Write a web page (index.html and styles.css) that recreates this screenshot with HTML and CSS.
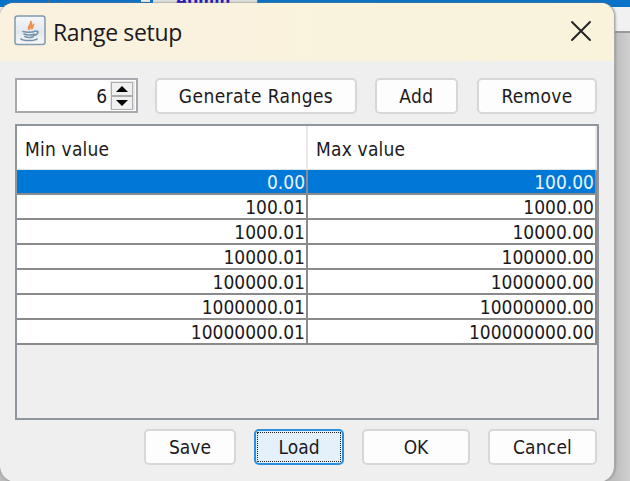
FILE: index.html
```
<!DOCTYPE html>
<html lang="en">
<head>
<meta charset="utf-8">
<title>Range setup</title>
<link rel="stylesheet" href="styles.css">
</head>
<body>
<div class="backdrop">
  <div class="back-bar"><span class="back-line"></span><span class="back-mark"></span><span class="back-tab">Admin</span></div>
  <div class="back-head"></div>
</div>
<main class="dialog">
  <header class="titlebar">
    <svg class="java" viewBox="0 0 32 31" width="32" height="31">
      <defs><linearGradient id="tile" x2="0" y2="1"><stop offset="0" stop-color="#f4f7fa"/><stop offset=".55" stop-color="#e3e8ed"/><stop offset="1" stop-color="#f8f8f7"/></linearGradient></defs>
      <rect x="1" y="1" width="30" height="28.500" rx="2.500" fill="url(#tile)" stroke="#7f9bb0" stroke-width="1.500"/>
      <path d="M15.500 15c-4-4 3-5 1-9 4 4-2 5-1 9m2-1c-1-2 0-3 2-4-1 2 0 3-2 4" fill="#ee914c" stroke="#ee914c" stroke-width="1.400"/>
      <g fill="none" stroke="#7393ab" stroke-width="1.700" stroke-linecap="round"><path d="M9 16.500c3 1 9 1 12-.2M10 19c3 1 8 1 10 .2M11 21.500c2 1 6 1 8 .2M22 16c4 0 1 4-2 4.500M7 24c2 2 14 2 16 0"/></g>
    </svg>
    <h1>Range setup</h1>
    <svg class="close" viewBox="0 0 20 20" width="20" height="20"><path d="M1 1l18 18M19 1L1 19"/></svg>
  </header>
  <div class="tools">
    <div class="spinner"><span>6</span>
      <div class="arrows"><i class="up"></i><i class="down"></i></div>
    </div>
    <button class="generate">Generate Ranges</button>
    <button class="add">Add</button>
    <button class="remove">Remove</button>
  </div>
  <div class="viewport">
    <table>
      <thead><tr><th>Min value</th><th>Max value</th></tr></thead>
      <tbody>
        <tr class="selected"><td>0.00</td><td>100.00</td></tr>
        <tr><td>100.01</td><td>1000.00</td></tr>
        <tr><td>1000.01</td><td>10000.00</td></tr>
        <tr><td>10000.01</td><td>100000.00</td></tr>
        <tr><td>100000.01</td><td>1000000.00</td></tr>
        <tr><td>1000000.01</td><td>10000000.00</td></tr>
        <tr><td>10000000.01</td><td>100000000.00</td></tr>
      </tbody>
    </table>
  </div>
  <footer class="actions">
    <button class="save">Save</button>
    <button class="load"><span>Load</span></button>
    <button class="ok">OK</button>
    <button class="cancel">Cancel</button>
  </footer>
</main>
</body>
</html>
```
FILE: styles.css
```
* { box-sizing: border-box; }
body {
  margin: 0;
  width: 630px;
  height: 481px;
  overflow: hidden;
  position: relative;
  background: linear-gradient(90deg, #bdbdbd 614px, #d0d0d0 630px);
  font: 19px "DejaVu Sans Condensed", "DejaVu Sans", sans-serif;
  font-stretch: condensed;
  color: #1c1a20;
}
.backdrop { position: absolute; inset: 0; }
.back-bar { height: 7px; background: #0872c8; display: flex; overflow: hidden; }
.back-line { width: 49px; border-right: 1px solid #4d6d88; }
.back-mark { width: 9px; height: 2px; margin-left: 92px; background: #eee; }
.back-tab {
  width: 105px; height: 4px; margin-left: 3px; overflow: hidden;
  background: #e2e2e2; border-right: 1px solid #777;
  color: #2314b5; text-align: center; font-weight: bold; font-size: 17px; line-height: 0;
  text-indent: -4px;
}
.back-head { height: 26px; background: #f1f1f1; border-bottom: 2px solid #999; }
.dialog {
  position: relative;
  width: 615px;
  height: 479px;
  margin-top: 3px;
  border-right: 1px solid #aaa;
  border-radius: 14px 14px 16px 16px;
  background: #efefef;
  overflow: hidden;
  box-shadow: 0 0 3px #777;
}
.titlebar {
  height: 58px;
  padding: 0 23px 0 14px;
  display: flex;
  align-items: center;
  background: linear-gradient(90deg, #faf2df, #f9f3dc);
}
.java { margin-top: -3px; }
h1 {
  margin: 0 auto 0 7px;
  font: 23px/30px "Open Sans", "Noto Sans", sans-serif;
  letter-spacing: -.35px;
}
.close { margin-top: -2px; fill: none; stroke: #222; stroke-width: 1.900; stroke-linecap: round; }
.tools { display: flex; padding: 17px 0 0 15px; height: 63px; }
button {
  height: 36px;
  padding: 0;
  border: 2px solid #d7d7d7;
  border-radius: 5px;
  background: #fdfdfd;
  color: inherit;
  font: inherit;
  line-height: 30px;
  white-space: nowrap;
}
.spinner {
  width: 123px; height: 35px; padding: 1px;
  display: flex; justify-content: flex-end;
  border: 2px solid #a8a8ae; background: #fff;
  line-height: 31px;
}
.arrows { width: 25px; margin-left: 3px; background: #e8e8e8; padding: 1px 2px 1px 1px; }
.arrows i { display: flex; height: 14px; border: 1px solid #adadad; align-items: center; justify-content: center; background: #f0f0f0; }
.arrows i::after { content: ""; border: 6px solid transparent; }
.up::after { border-bottom-color: #000 !important; border-top: 0 !important; }
.down::after { border-top-color: #000 !important; border-bottom: 0 !important; }
.generate { width: 202px; margin-left: 17px; letter-spacing: .4px; }
.add { width: 83px; margin-left: 18px; letter-spacing: .4px; }
.remove { width: 120px; margin-left: 19px; letter-spacing: .3px; }
.viewport { margin-left: 15px; width: 584px; height: 296px; border: 2px solid #8f969e; }
table { width: 580px; border-collapse: separate; border-spacing: 0; table-layout: fixed; background: #fff; }
th { height: 44px; padding: 2px 0 0 8px; text-align: left; font-weight: normal; letter-spacing: .2px; border-right: 2px solid #e9e9e9; border-bottom: 1px solid #d9e5ee; }
th:first-child { width: 291px; }
td { height: 25px; padding: 1px 1px 0 0; line-height: 22px; text-align: right; border-right: 2px solid #8a8a8a; border-bottom: 2px solid #8a8a8a; }
.selected { background: #0078d7; color: #eaf4ff; }
.actions { display: flex; padding: 9px 0 0 144px; }
.save { width: 92px; }
.load { width: 90px; margin-left: 18px; border-color: #2b8fdd; background: #e5f1fa; padding: 1px; }
.load span { display: block; height: 30px; line-height: 29px; border: 1px dotted #222; }
.ok { width: 108px; margin-left: 18px; }
.cancel { width: 109px; margin-left: 18px; letter-spacing: .2px; }
```
